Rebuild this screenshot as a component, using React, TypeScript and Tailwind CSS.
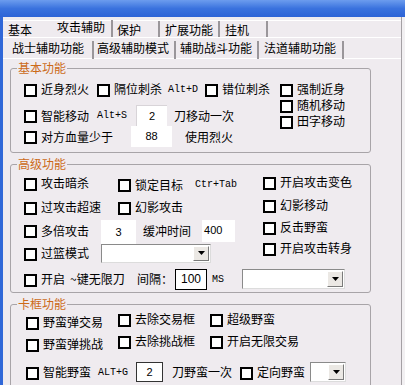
import type { ReactNode } from "react";

const mono = "font-['Liberation_Mono',monospace] text-[10px]";

function Box() {
  return <span className="block w-[13px] h-[13px] mt-[2px] shrink-0 border-2 border-black bg-white" />;
}

function Check({ label, className = "" }: { label: string; className?: string }) {
  return (
    <div className={"flex items-center gap-[4px] shrink-0 " + className}>
      <Box />
      <span className="leading-[14px] whitespace-nowrap">{label}</span>
    </div>
  );
}

function Field({ value, className = "" }: { value: string; className?: string }) {
  return (
    <div
      className={
        "flex shrink-0 items-center bg-white font-['Liberation_Sans',sans-serif] text-[11px] " + className
      }
    >
      {value}
    </div>
  );
}

function Combo({ className = "" }: { className?: string }) {
  return (
    <div
      className={
        "flex shrink-0 bg-white border border-[#8a8a8a] border-r-[#dcdcdc] border-b-[#dcdcdc] p-[1px] " + className
      }
    >
      <div className="flex-1" />
      <div className="w-[16px] flex items-center justify-center bg-[#ebe8e4] border border-t-white border-l-white border-r-[#7a7a7a] border-b-[#7a7a7a]">
        <svg width="7" height="4" viewBox="0 0 7 4">
          <path d="M0 0h7L3.5 4z" fill="#000" />
        </svg>
      </div>
    </div>
  );
}

function Group({ title, className = "", children }: { title: string; className?: string; children: ReactNode }) {
  return (
    <div className={"ml-[7px] w-[361px] shrink-0 border border-[#a8a4a8] rounded-[3px] " + className}>
      <div className="-mt-[8px] ml-[6px] w-fit px-[1px] bg-[#efebef] text-[#cc6a18] leading-[14px]">{title}</div>
      {children}
    </div>
  );
}

export default function App() {
  return (
    <div className="w-[405px] h-[385px] overflow-hidden flex flex-col bg-[#efebef] text-[12px] text-black font-['Noto_Sans_CJK_SC','Noto_Sans',sans-serif]">
      {/* title bar */}
      <div className="h-[17px] shrink-0 bg-linear-to-b from-[#6c9cee] via-[#3a72de] to-[#2d63d6]" />

      <div className="flex flex-1 min-h-0">
        <div className="w-[3px] shrink-0 bg-[#3168d8]" />

        <div className="w-[399px] shrink-0 border-r border-[#a4a0a4] flex flex-col">
          {/* outer tabs */}
          <div className="h-[20px] shrink-0 pt-[3px]">
            <div className="flex h-[17px] border-t border-white leading-[14px]">
              <div className="w-[49px] pl-[5px] pt-[2px]">基本</div>
              <div className="w-[61px] pl-[5px] -mt-[1px] border-r-2 border-[#9a969a]">攻击辅助</div>
              <div className="w-[47px] pl-[4px] pt-[2px] border-r-2 border-[#9a969a]">保护</div>
              <div className="w-[60px] pl-[5px] pt-[2px] border-r-2 border-[#9a969a]">扩展功能</div>
              <div className="w-[48px] pl-[5px] pt-[2px] border-r-2 border-[#9a969a]">挂机</div>
            </div>
          </div>
          <div className="h-px shrink-0 bg-white" />

          {/* inner tabs */}
          <div className="flex h-[21px] shrink-0 border-b border-white leading-[14px]">
            <div className="w-[91px] pl-[9px] pt-[3px] mt-[3px] -mb-[1px] border-r-2 border-[#9a969a] flex items-start">
              <span className="-mt-[3px]">战士辅助功能</span>
            </div>
            <div className="w-[82px] pl-[3px] pt-[3px] mt-[3px] -mb-[1px] border-r-2 border-[#9a969a] flex items-start">
              <span className="-mt-[3px]">高级辅助模式</span>
            </div>
            <div className="w-[83px] pl-[4px] pt-[3px] mt-[3px] -mb-[1px] border-r-2 border-[#9a969a] flex items-start">
              <span className="-mt-[3px]">辅助战斗功能</span>
            </div>
            <div className="w-[85px] pl-[5px] pt-[3px] mt-[3px] -mb-[1px] border-r-2 border-[#9a969a] flex items-start">
              <span className="-mt-[3px]">法道辅助功能</span>
            </div>
          </div>

          {/* 基本功能 */}
          <Group title="基本功能" className="mt-[9px] h-[85px]">
            <div className="flex">
              <div className="w-[269px] pl-[13px] pt-[2px] flex flex-col">
                <div className="flex items-center h-[24px]">
                  <Check label="近身烈火" className="w-[73px]" />
                  <Check label="隔位刺杀" className="w-[71px]" />
                  <span className={mono + " w-[37px]"}>Alt+D</span>
                  <Check label="错位刺杀" />
                </div>
                <div className="flex items-center h-[21px] mt-[4px]">
                  <Check label="智能移动" className="w-[73px]" />
                  <span className={mono + " w-[39px]"}>Alt+S</span>
                  <Field value="2" className="w-[31px] h-[22px] justify-center border-t border-l border-[#d8d4d8]" />
                  <span className="ml-[7px]">刀移动一次</span>
                </div>
                <div className="flex items-center h-[21px]">
                  <Check label="对方血量少于" className="w-[107px]" />
                  <Field value="88" className="w-[41px] h-[21px] justify-center" />
                  <span className="ml-[13px]">使用烈火</span>
                </div>
              </div>
              <div className="flex flex-col pt-[6px]">
                <Check label="强制近身" className="h-[16px]" />
                <Check label="随机移动" className="h-[16px]" />
                <Check label="田字移动" className="h-[16px]" />
              </div>
            </div>
          </Group>

          {/* 高级功能 */}
          <Group title="高级功能" className="mt-[11px] h-[129px]">
            <div className="flex">
              <div className="w-[252px] pl-[13px] flex flex-col">
                <div className="flex items-center h-[24px]">
                  <Check label="攻击暗杀" className="w-[94px]" />
                  <Check label="锁定目标" className="w-[77px] mt-[3px]" />
                  <span className={mono + " mt-[2px]"}>Ctr+Tab</span>
                </div>
                <div className="flex items-center h-[24px]">
                  <Check label="过攻击超速" className="w-[94px]" />
                  <Check label="幻影攻击" />
                </div>
                <div className="flex items-center h-[23px]">
                  <Check label="多倍攻击" className="w-[77px]" />
                  <Field value="3" className="w-[35px] h-[24px] mt-[3px] justify-center" />
                  <span className="ml-[7px]">缓冲时间</span>
                  <Field value="400" className="ml-[11px] w-[33px] h-[22px] pl-[2px]" />
                </div>
                <div className="flex items-center h-[22px]">
                  <Check label="过篮模式" className="w-[77px]" />
                  <Combo className="w-[110px] h-[19px]" />
                </div>
              </div>
              <div className="flex flex-col">
                <Check label="开启攻击变色" className="h-[22px]" />
                <Check label="幻影移动" className="h-[24px]" />
                <Check label="反击野蛮" className="h-[20px]" />
                <Check label="开启攻击转身" className="h-[22px]" />
              </div>
            </div>
            <div className="flex items-center h-[24px] mt-[3px] pl-[13px]">
              <Check label="开启" className="w-[46px]" />
              <span className="w-[67px]">~键无限刀</span>
              <span className="w-[38px]">间隔：</span>
              <Field value="100" className="w-[32px] h-[21px] justify-center text-[12px] border border-black" />
              <span className={mono + " ml-[5px] w-[30px]"}>MS</span>
              <Combo className="w-[103px] h-[20px]" />
            </div>
          </Group>

          {/* 卡框功能 */}
          <Group title="卡框功能" className="mt-[11px] h-[100px]">
            <div className="flex">
              <div className="w-[107px] pl-[15px] flex flex-col">
                <Check label="野蛮弹交易" className="h-[22px]" />
                <Check label="野蛮弹挑战" className="h-[22px]" />
              </div>
              <div className="w-[92px] flex flex-col">
                <Check label="去除交易框" className="h-[16px]" />
                <Check label="去除挑战框" className="h-[16px] mt-[6px]" />
              </div>
              <div className="flex flex-col">
                <Check label="超级野蛮" className="h-[16px]" />
                <Check label="开启无限交易" className="h-[16px] mt-[6px]" />
              </div>
            </div>
            <div className="flex items-center h-[20px] mt-[7px] pl-[15px]">
              <Check label="智能野蛮" className="w-[72px]" />
              <span className={mono + " w-[38px]"}>ALT+G</span>
              <Field value="2" className="w-[27px] h-[20px] justify-center border border-[#333]" />
              <span className="ml-[9px] w-[68px]">刀野蛮一次</span>
              <Check label="定向野蛮" className="w-[70px]" />
              <Combo className="w-[36px] h-[20px]" />
            </div>
          </Group>
        </div>

        <div className="flex-1 bg-[#f2f0f2]" />
      </div>
    </div>
  );
}
